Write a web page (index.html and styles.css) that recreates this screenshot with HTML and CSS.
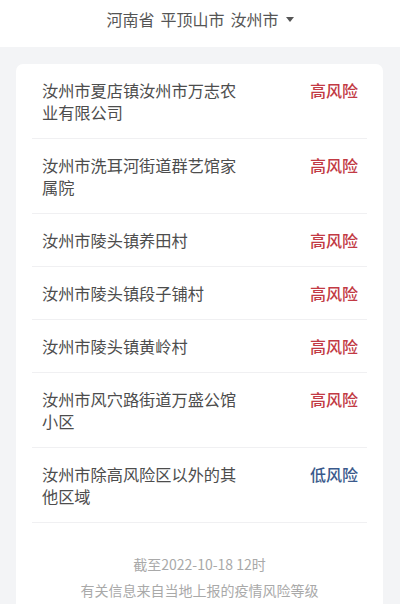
FILE: index.html
```html
<!DOCTYPE html>
<html>
	<head>
		<meta charset="UTF-8">
		<title>风险等级</title>
		<link rel="stylesheet" href="styles.css">
	</head>
	<body>
		<div class="top">
			<span>河南省</span>
			<span>平顶山市</span>
			<span>汝州市</span>
			<svg class="caret" width="8" height="5" viewBox="0 0 8 5"><path d="M0 0h8L4 5z" fill="#555"/></svg>
		</div>
		<div class="card">
			<ul class="list">
				<li><span class="name">汝州市夏店镇汝州市万志农业有限公司</span><span class="level high">高风险</span></li>
				<li><span class="name">汝州市洗耳河街道群艺馆家属院</span><span class="level high">高风险</span></li>
				<li><span class="name">汝州市陵头镇养田村</span><span class="level high">高风险</span></li>
				<li><span class="name">汝州市陵头镇段子铺村</span><span class="level high">高风险</span></li>
				<li><span class="name">汝州市陵头镇黄岭村</span><span class="level high">高风险</span></li>
				<li><span class="name">汝州市风穴路街道万盛公馆小区</span><span class="level high">高风险</span></li>
				<li><span class="name">汝州市除高风险区以外的其他区域</span><span class="level low">低风险</span></li>
			</ul>
			<div class="foot">
				<p>截至2022-10-18 12时</p>
				<p>有关信息来自当地上报的疫情风险等级</p>
			</div>
		</div>
	</body>
</html>
```

FILE: styles.css
```css
*{ margin: 0; padding: 0;}
body{ background: #f3f4f6; font-family: "Noto Sans CJK SC", "Noto Sans", sans-serif; color: #4d4d4d;}
.top{ height: 47px; background: #fff; display: flex; align-items: center; justify-content: center; gap: 6px; padding-bottom: 10px; box-sizing: border-box; font-size: 16px; color: #555;}
.caret{ margin-left: 1px; margin-top: 1px;}
.card{ background: #fff; margin: 17px 17px 0 16px; border-radius: 7px 7px 0 0; padding: 0 16px 1px;}
.list{ list-style: none;}
.list li{ display: flex; justify-content: space-between; align-items: flex-start; padding: 15px 9px 15px 10px; border-bottom: 1px solid #f0f0f2;}
.name{ width: 200px; font-size: 16.2px; line-height: 22px;}
.level{ font-size: 16px; line-height: 22px; font-weight: 500;}
.high{ color: #c23a44;}
.low{ color: #3a5a8c;}
.foot{ padding-top: 28px; text-align: center; font-size: 14px; line-height: 26px; color: #a9a9a9;}
```
